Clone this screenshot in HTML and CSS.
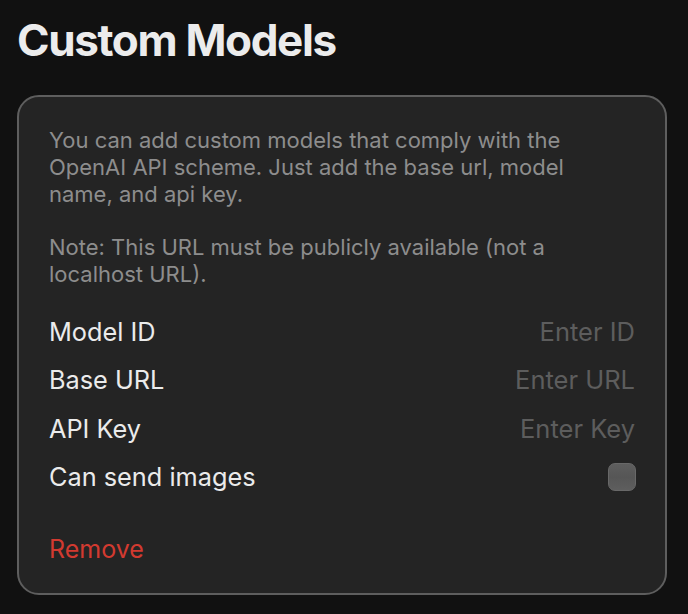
FILE: index.html
```html
<!DOCTYPE html>
<html lang="en">
<head>
<meta charset="utf-8">
<title>Custom Models</title>
<link rel="stylesheet" href="styles.css">
</head>
<body>
<main class="page">
  <h1 class="title">Custom Models</h1>
  <section class="card">
    <p class="desc">You can add custom models that comply with the OpenAI API scheme. Just add the base url, model name, and api key.</p>
    <p class="desc note">Note: This URL must be publicly available (not a localhost URL).</p>
    <div class="fields">
      <label class="row"><span class="label">Model ID</span><input class="input" type="text" placeholder="Enter ID"></label>
      <label class="row"><span class="label">Base URL</span><input class="input" type="text" placeholder="Enter URL"></label>
      <label class="row"><span class="label">API Key</span><input class="input" type="text" placeholder="Enter Key"></label>
      <label class="row"><span class="label">Can send images</span><span class="check"></span></label>
    </div>
    <button class="remove" type="button">Remove</button>
  </section>
</main>
</body>
</html>
```
FILE: styles.css
```css
* { box-sizing: border-box; }
html, body { margin: 0; background: #111111; }
body { font-family: Inter, "Noto Sans", sans-serif; color: #e8e8e8; }
.page { padding: 14px 21px 0 17px; }
.title {
  margin: 0;
  font-size: 44px;
  line-height: 53px;
  font-weight: 700;
  color: #ececec;
  letter-spacing: -1.35px;
}
.card {
  margin-top: 28px;
  width: 650px;
  height: 500px;
  border: 2px solid #5e5e5e;
  border-radius: 22px;
  background: #242424;
  padding: 30px 30px 0 30px;
  display: flex;
  flex-direction: column;
}
.desc {
  margin: 0;
  max-width: 560px;
  font-size: 22px;
  line-height: 27px;
  color: #8d8d8d;
}
.note { margin-top: 26px; }
.fields {
  margin-top: 19px;
  display: flex;
  flex-direction: column;
}
.row {
  height: 48.5px;
  display: flex;
  align-items: center;
  justify-content: space-between;
}
.label { font-size: 25.3px; color: #ebebeb; }
.input {
  font-family: inherit;
  font-size: 25.5px;
  background: transparent;
  border: 0;
  outline: 0;
  padding: 0;
  text-align: right;
  width: 260px;
  color: #ebebeb;
}
.input::placeholder { color: #5d5d5d; }
.check {
  width: 28px;
  height: 28px;
  border-radius: 7px;
  background: linear-gradient(#5e5e5e, #565656 50%, #5e5e5e);
  border: 1px solid #686868;
  margin-right: -1px;
}
.remove {
  align-self: flex-start;
  margin-top: 24px;
  padding: 0;
  border: 0;
  background: none;
  font-family: inherit;
  font-size: 25px;
  line-height: 48px;
  color: #d23a30;
}
```
